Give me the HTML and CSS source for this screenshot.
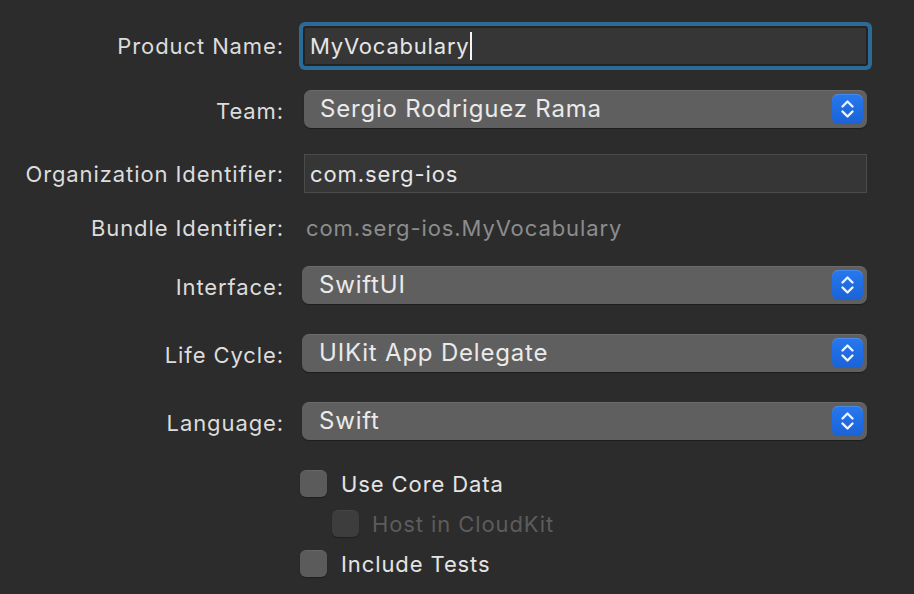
FILE: index.html
```html
<!DOCTYPE html>
<html>
<head>
<meta charset="utf-8">
<link rel="stylesheet" href="styles.css">
</head>
<body>
<div class="form">
  <div class="row r-product">
    <div class="label">Product Name:</div>
    <div class="control"><div class="field focused"><span>MyVocabulary</span><span class="caret"></span></div></div>
  </div>
  <div class="row r-team">
    <div class="label lower">Team:</div>
    <div class="control"><div class="popup team"><span class="ptext">Sergio Rodriguez Rama</span><span class="stepper"><svg width="31" height="30" viewBox="0 0 31 30"><path d="M10.5 12.5 L15.5 7.5 L20.5 12.5 M10.5 17.5 L15.5 22.5 L20.5 17.5" fill="none" stroke="#eef3ff" stroke-width="2.4" stroke-linecap="round" stroke-linejoin="round"/></svg></span></div></div>
  </div>
  <div class="row r-org">
    <div class="label">Organization Identifier:</div>
    <div class="control"><div class="field plain"><span>com.serg-ios</span></div></div>
  </div>
  <div class="row r-bundle">
    <div class="label">Bundle Identifier:</div>
    <div class="control"><div class="static">com.serg-ios.MyVocabulary</div></div>
  </div>
  <div class="row r-iface">
    <div class="label lower">Interface:</div>
    <div class="control"><div class="popup wide"><span class="ptext">SwiftUI</span><span class="stepper"><svg width="31" height="30" viewBox="0 0 31 30"><path d="M10.5 12.5 L15.5 7.5 L20.5 12.5 M10.5 17.5 L15.5 22.5 L20.5 17.5" fill="none" stroke="#eef3ff" stroke-width="2.4" stroke-linecap="round" stroke-linejoin="round"/></svg></span></div></div>
  </div>
  <div class="row r-life">
    <div class="label lower">Life Cycle:</div>
    <div class="control"><div class="popup wide"><span class="ptext">UIKit App Delegate</span><span class="stepper"><svg width="31" height="30" viewBox="0 0 31 30"><path d="M10.5 12.5 L15.5 7.5 L20.5 12.5 M10.5 17.5 L15.5 22.5 L20.5 17.5" fill="none" stroke="#eef3ff" stroke-width="2.4" stroke-linecap="round" stroke-linejoin="round"/></svg></span></div></div>
  </div>
  <div class="row r-lang">
    <div class="label lower">Language:</div>
    <div class="control"><div class="popup wide"><span class="ptext">Swift</span><span class="stepper"><svg width="31" height="30" viewBox="0 0 31 30"><path d="M10.5 12.5 L15.5 7.5 L20.5 12.5 M10.5 17.5 L15.5 22.5 L20.5 17.5" fill="none" stroke="#eef3ff" stroke-width="2.4" stroke-linecap="round" stroke-linejoin="round"/></svg></span></div></div>
  </div>
  <div class="checks">
    <div class="check c1"><span class="box"></span><span class="ctext">Use Core Data</span></div>
    <div class="check c2 disabled"><span class="box"></span><span class="ctext">Host in CloudKit</span></div>
    <div class="check c3"><span class="box"></span><span class="ctext">Include Tests</span></div>
  </div>
</div>
</body>
</html>
```
FILE: styles.css
```css
html, body {
  margin: 0;
  padding: 0;
  background: #2c2c2c;
  width: 914px;
  height: 594px;
  overflow: hidden;
}
body {
  font-family: Inter, "Noto Sans", "Liberation Sans", sans-serif;
  font-size: 22px;
  letter-spacing: 0.9px;
  color: #dedede;
}
.form {
  display: flex;
  flex-direction: column;
  padding-top: 20px;
}
.row {
  display: flex;
  align-items: center;
}
.label {
  width: 284px;
  text-align: right;
  flex: none;
  color: #dcdcdc;
  margin-right: -1px;
}
.label.lower { padding-top: 4px; }
.control {
  margin-left: 21px;
  width: 563px;
  display: flex;
  align-items: center;
}
.r-product { height: 52px; }
.r-team { height: 38px; margin-top: 18px; }
.r-org { height: 39px; margin-top: 26px; }
.r-bundle { height: 30px; margin-top: 20px; }
.r-iface { height: 38px; margin-top: 23px; }
.r-life { height: 38px; margin-top: 30px; }
.r-lang { height: 38px; margin-top: 30px; }

.field {
  box-sizing: border-box;
  width: 563px;
  height: 39px;
  background: #363636;
  border: 1px solid #4b4b4b;
  display: flex;
  align-items: center;
  padding-left: 5px;
  color: #e6e6e6;
}
.field.focused {
  height: 38px;
  border: 1px solid #242424;
  box-shadow: 0 0 0 1px #242424, 0 0 0 5px #2a6b98;
  border-radius: 2px;
  letter-spacing: 0.8px;
}
.caret {
  display: inline-block;
  width: 2px;
  height: 28px;
  background: #f4f4f4;
  margin-left: 0;
}
.static {
  padding-left: 2px;
  color: #8c8c8c;
}
.popup {
  box-sizing: border-box;
  height: 38px;
  width: 563px;
  background: #5f5f5f;
  border-radius: 7px;
  border-top: 1px solid #6a6a6a;
  box-shadow: 0 1px 1px rgba(0,0,0,0.35);
  display: flex;
  align-items: center;
  justify-content: space-between;
  padding-left: 16px;
  padding-right: 4px;
  color: #eaeaea;
  font-size: 24px;
  letter-spacing: 0.8px;
}
.popup.wide {
  width: 565px;
  margin-left: -2px;
  padding-left: 17px;
}
.ptext { margin-top: -3px; }
.stepper {
  width: 31px;
  height: 30px;
  border-radius: 6px;
  background: linear-gradient(#2778ee, #1a62d8);
  box-shadow: inset 0 1px 0 rgba(255,255,255,0.15);
  display: flex;
  margin-top: -1px;
}
.checks {
  display: flex;
  flex-direction: column;
  margin-top: 30px;
  padding-left: 300px;
}
.check {
  height: 27px;
  display: flex;
  align-items: center;
}
.check + .check { margin-top: 13px; }
.check.c2 { padding-left: 32px; }
.box {
  box-sizing: border-box;
  width: 27px;
  height: 27px;
  border-radius: 6px;
  background: #5b5b5b;
  border-top: 1px solid #676767;
  box-shadow: 0 1px 1px rgba(0,0,0,0.3);
  flex: none;
}
.ctext {
  margin-left: 14px;
  color: #e4e4e4;
}
.check.disabled .box { background: #3d3d3d; border-top-color: #454545; }
.check.disabled .ctext { color: #5c5c5c; margin-left: 13px; }
```
